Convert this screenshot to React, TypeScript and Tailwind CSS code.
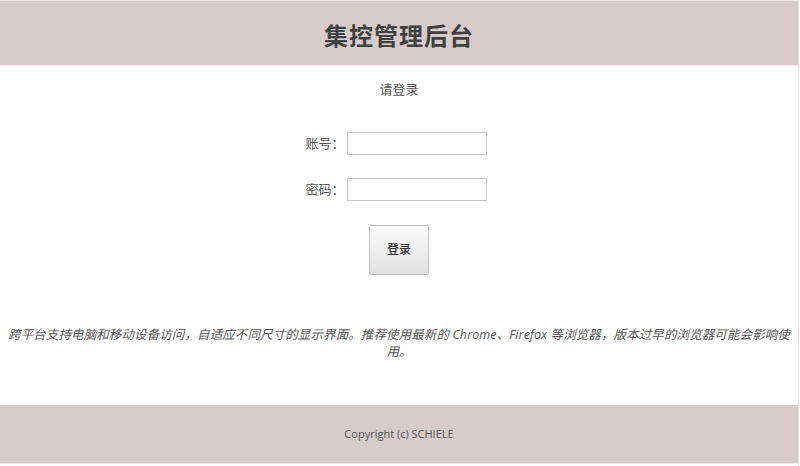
import React from "react";

export default function App() {
  const font = { fontFamily: '"Open Sans", "Noto Sans CJK SC", sans-serif' };
  return (
    <div
      className="w-[799px] h-[466px] bg-white border-t border-r border-[#ece6e6] flex flex-col text-[#555]"
      style={font}
    >
      <header className="h-[65px] shrink-0 bg-[#d7cbcb] border-b border-[#efe9e9] flex items-center justify-center">
        <h1 className="text-[24px] font-bold text-[#404040] leading-none tracking-[1px] mt-[5px]">
          集控管理后台
        </h1>
      </header>

      <div className="flex flex-col items-center">
        <p className="mt-[15px] text-[13px] leading-[17px] text-[#555]">请登录</p>

        <div className="mt-[34px] pr-[6px] flex items-center gap-[2px]">
          <label className="text-[13px] leading-[17px] text-[#555]">账号：</label>
          <input
            type="text"
            className="w-[140px] h-[23px] border border-[#c9c9c9] bg-white outline-none"
          />
        </div>

        <div className="mt-[23px] pr-[6px] flex items-center gap-[2px]">
          <label className="text-[13px] leading-[17px] text-[#555]">密码：</label>
          <input
            type="password"
            className="w-[140px] h-[23px] border border-[#c9c9c9] bg-white outline-none"
          />
        </div>

        <button className="mt-[24px] w-[60px] h-[50px] border border-[#c2c2c2] rounded-[2px] bg-gradient-to-b from-[#fbfbfb] to-[#e1e1e1] text-[12px] font-medium text-[#333]">
          登录
        </button>

        <p className="mt-[51px] text-center italic text-[12.5px] leading-[17px] tracking-[0.1px] text-[#555]">
          <span className="whitespace-nowrap">
            跨平台支持电脑和移动设备访问，自适应不同尺寸的显示界面。推荐使用最新的 Chrome、Firefox 等浏览器，版本过早的浏览器可能会影响使
          </span>
          <br />
          <span>用。</span>
        </p>
      </div>

      <div className="flex-1" />

      <footer className="h-[59px] shrink-0 bg-[#d7cbcb] border-b border-[#ece6e6] mb-[2px] flex items-center justify-center">
        <span className="text-[11px] text-[#555]">Copyright (c) SCHIELE</span>
      </footer>
    </div>
  );
}
